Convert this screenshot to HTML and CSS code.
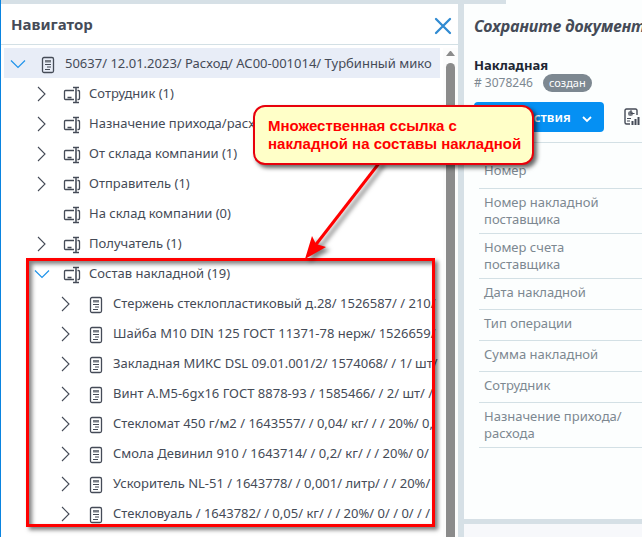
FILE: index.html
```html
<!DOCTYPE html>
<html lang="ru">
<head>
	<meta charset="utf-8">
	<title>Накладная</title>
	<link rel="stylesheet" href="styles.css">
</head>
<body>
	<svg class="sprite">
		<symbol id="doc" viewBox="0 0 18 18">
			<rect x="3.500" y="1.500" width="11" height="15" rx="1.500" fill="none" stroke="#454b57" stroke-width="1.300"/>
			<path d="M6 4h6v2.500H6z" fill="#777c85"/>
			<path d="M6 8.500h6M8 11h4M6 13.500h5" stroke="#454b57" stroke-width="1.100"/>
		</symbol>
		<symbol id="field" viewBox="0 0 18 18">
			<path d="M11 4.500H2.500q-1 0-1 1v7q0 1 1 1H11M14.500 4.500h1q1 0 1 1v7q0 1-1 1h-1M4.500 11.500h4" fill="none" stroke="#454b57" stroke-width="1.300"/>
			<path d="M10 1.500h6M10 16.500h6" stroke="#454b57" stroke-width="1.300"/>
			<path d="M13 2v14" stroke="#6c717b" stroke-width="2"/>
		</symbol>
		<symbol id="right" viewBox="0 0 16 16">
			<path d="M4 1l7 7-7 7" fill="none" stroke="#454b57" stroke-width="1.100"/>
		</symbol>
		<symbol id="down" viewBox="0 0 16 16">
			<path d="M1 4.500l7 7 7-7" fill="none" stroke="#1f93ea" stroke-width="1.200"/>
		</symbol>
	</svg>
	<div class="page">
		<nav class="navigator">
			<div class="nav-head">
				<h2>Навигатор</h2>
				<button class="close" aria-label="Закрыть">
					<svg width="18" height="18" viewBox="0 0 18 18"><path d="M2 2l14 14M16 2L2 16" stroke="#318bd2" stroke-width="2.300" stroke-linecap="round"/></svg>
				</button>
			</div>
			<div class="nav-body">
				<ul class="tree">
					<li class="row root"><button class="toggle" aria-label="Свернуть"><svg><use href="#down"/></svg></button><svg class="ico"><use href="#doc"/></svg><a href="#">50637/ 12.01.2023/ Расход/ АС00-001014/ Турбинный мико</a></li>
					<li class="row sub"><button class="toggle" aria-label="Развернуть"><svg><use href="#right"/></svg></button><svg class="ico"><use href="#field"/></svg><a href="#">Сотрудник (1)</a></li>
					<li class="row sub"><button class="toggle" aria-label="Развернуть"><svg><use href="#right"/></svg></button><svg class="ico"><use href="#field"/></svg><a href="#">Назначение прихода/расхода (1)</a></li>
					<li class="row sub"><button class="toggle" aria-label="Развернуть"><svg><use href="#right"/></svg></button><svg class="ico"><use href="#field"/></svg><a href="#">От склада компании (1)</a></li>
					<li class="row sub"><button class="toggle" aria-label="Развернуть"><svg><use href="#right"/></svg></button><svg class="ico"><use href="#field"/></svg><a href="#">Отправитель (1)</a></li>
					<li class="row sub"><span class="toggle"></span><svg class="ico"><use href="#field"/></svg><a href="#">На склад компании (0)</a></li>
					<li class="row sub"><button class="toggle" aria-label="Развернуть"><svg><use href="#right"/></svg></button><svg class="ico"><use href="#field"/></svg><a href="#">Получатель (1)</a></li>
					<li class="row sub"><button class="toggle" aria-label="Свернуть"><svg><use href="#down"/></svg></button><svg class="ico"><use href="#field"/></svg><a href="#">Состав накладной (19)</a></li>
					<li class="row item"><button class="toggle" aria-label="Развернуть"><svg><use href="#right"/></svg></button><svg class="ico"><use href="#doc"/></svg><a href="#">Стержень стеклопластиковый д.28/ 1526587/ / 210/</a></li>
					<li class="row item"><button class="toggle" aria-label="Развернуть"><svg><use href="#right"/></svg></button><svg class="ico"><use href="#doc"/></svg><a href="#">Шайба М10 DIN 125 ГОСТ 11371-78 нерж/ 1526659/</a></li>
					<li class="row item"><button class="toggle" aria-label="Развернуть"><svg><use href="#right"/></svg></button><svg class="ico"><use href="#doc"/></svg><a href="#">Закладная МИКС DSL 09.01.001/2/ 1574068/ / 1/ шт/</a></li>
					<li class="row item"><button class="toggle" aria-label="Развернуть"><svg><use href="#right"/></svg></button><svg class="ico"><use href="#doc"/></svg><a href="#">Винт А.М5-6gx16 ГОСТ 8878-93 / 1585466/ / 2/ шт/ /</a></li>
					<li class="row item"><button class="toggle" aria-label="Развернуть"><svg><use href="#right"/></svg></button><svg class="ico"><use href="#doc"/></svg><a href="#">Стекломат 450 г/м2 / 1643557/ / 0,04/ кг/ / / 20%/ 0,</a></li>
					<li class="row item"><button class="toggle" aria-label="Развернуть"><svg><use href="#right"/></svg></button><svg class="ico"><use href="#doc"/></svg><a href="#">Смола Девинил 910 / 1643714/ / 0,2/ кг/ / / 20%/ 0/</a></li>
					<li class="row item"><button class="toggle" aria-label="Развернуть"><svg><use href="#right"/></svg></button><svg class="ico"><use href="#doc"/></svg><a href="#">Ускоритель NL-51 / 1643778/ / 0,001/ литр/ / / 20%/</a></li>
					<li class="row item"><button class="toggle" aria-label="Развернуть"><svg><use href="#right"/></svg></button><svg class="ico"><use href="#doc"/></svg><a href="#">Стекловуаль / 1643782/ / 0,05/ кг/ / / 20%/ 0/ / 0/ / /</a></li>
				</ul>
				<div class="scroll">
					<span class="scroll-up"></span>
					<span class="thumb"></span>
				</div>
			</div>
		</nav>
		<main class="content">
			<section class="card">
				<p class="notice">Сохраните документ</p>
				<h1>Накладная</h1>
				<div class="meta"><span># 3078246</span><span class="badge">создан</span></div>
				<div class="tools">
					<button class="actions">Действия <svg width="12" height="8" viewBox="0 0 12 8"><path d="M2 2l4 4 4-4" fill="none" stroke="#fff" stroke-width="1.800"/></svg></button>
					<button class="report" aria-label="Отчёт">
						<svg width="16" height="18" viewBox="0 0 16 18">
							<path d="M13 7V2.500q0-1.500-1.500-1.500h-9Q1 1 1 2.500v12Q1 16 2.500 16H6" fill="none" stroke="#454b57" stroke-width="1.400"/>
							<circle cx="6.500" cy="5.500" r="2.500" fill="#777c85"/>
							<path d="M7 2v3.500h3.500M3 10.500h4M3 13h3" fill="none" stroke="#454b57"/>
							<path d="M8.500 17v-4M11.500 17v-6M14.500 17V9" stroke="#454b57" stroke-width="2"/>
						</svg>
					</button>
				</div>
				<table class="fields">
					<tr><th>Номер</th><td></td></tr>
					<tr><th>Номер накладной поставщика</th><td></td></tr>
					<tr><th>Номер счета<br>поставщика</th><td></td></tr>
					<tr><th>Дата накладной</th><td></td></tr>
					<tr><th>Тип операции</th><td></td></tr>
					<tr><th>Сумма накладной</th><td></td></tr>
					<tr><th>Сотрудник</th><td></td></tr>
					<tr><th>Назначение прихода/<wbr>расхода</th><td></td></tr>
				</table>
			</section>
			<section class="next-card"></section>
		</main>
	</div>
	<!-- пояснения поверх интерфейса -->
	<div class="frame"></div>
	<svg class="pointer" width="90" height="110" viewBox="0 0 90 110">
		<path d="M80 5L14 90" stroke="#f00" stroke-width="3"/>
		<path d="M5 102l7-23 4 8 10 3z" fill="#f00"/>
	</svg>
	<div class="callout">Множественная ссылка с<br>накладной на составы накладной</div>
</body>
</html>
```
FILE: styles.css
```css
* {
	margin: 0;
	padding: 0;
	box-sizing: border-box;
}
body {
	font: 13px/17px "Noto Sans", "Open Sans", sans-serif;
	color: #454b57;
	background: #d6e0e6;
	overflow: hidden;
}
a {
	color: inherit;
	text-decoration: none;
}
button {
	font: inherit;
	color: inherit;
	border: 0;
	background: none;
	cursor: pointer;
}
.sprite {
	display: none;
}
.page {
	display: flex;
	gap: 6px;
	height: 100vh;
	border-left: 1px solid #0a84e0;
}
.navigator {
	display: flex;
	flex-direction: column;
	flex: 0 0 457px;
	min-width: 0;
	margin-top: 4px;
	background: #fff;
}
.nav-head {
	display: flex;
	align-items: center;
	justify-content: space-between;
	height: 41px;
	padding: 0 6px 0 10px;
	border-bottom: 1px solid #d3e0e5;
}
.nav-head h2 {
	font-size: 15px;
	line-height: 20px;
}
.close {
	height: 18px;
	padding-top: 2px;
}
.close svg {
	display: block;
}
.nav-body {
	display: flex;
	flex: 1;
	min-height: 0;
	padding: 3px 0 0 3px;
}
.tree {
	flex: 1;
	min-width: 0;
	overflow: hidden;
	list-style: none;
}
.row {
	display: flex;
	align-items: center;
	height: 30px;
	white-space: nowrap;
}
.root {
	margin-right: 3px;
	background: #e8edf7;
}
.sub {
	padding-left: 24px;
}
.item {
	padding-left: 48px;
}
.toggle {
	flex: 0 0 28px;
	height: 16px;
}
.toggle svg {
	display: block;
	width: 16px;
	height: 16px;
	margin: 1px auto 0;
}
.ico {
	flex: 0 0 18px;
	height: 18px;
	margin: 3px 8px 0 7px;
}
.scroll {
	flex: 0 0 15px;
	padding: 3px 3px 0;
	background: #fcfcfc;
}
.scroll span {
	display: block;
}
.scroll-up {
	width: 9px;
	border: 4px solid transparent;
	border-top: 0;
	border-bottom: 5px solid #8b8b8b;
}
.thumb {
	width: 9px;
	height: 100%;
	margin-top: 7px;
	border-radius: 5px;
	background: #8b8b8b;
}
.content {
	display: flex;
	flex-direction: column;
	gap: 5px;
	flex: 1;
	min-width: 0;
	overflow: hidden;
}
.card {
	flex: 0 0 519px;
	padding: 12px 0 0 10px;
	border-top: 4px solid #d6e0e6;
	border-image: linear-gradient(to right, #d6e0e6 44px, #fcfefe 44px) 4;
	background: #fcfefe;
}
.next-card {
	flex: 1;
	background: #f7f8fb;
}
.notice {
	font-size: 16px;
	line-height: 20px;
	font-weight: bold;
	font-style: italic;
	white-space: nowrap;
}
h1 {
	margin-top: 20px;
	font-size: 13px;
	line-height: 18px;
	color: #212633;
}
.meta {
	display: flex;
	gap: 10px;
	font-size: 12px;
	line-height: 18px;
	color: #7d8891;
}
.badge {
	padding: 0 6px;
	border-radius: 9px;
	font-size: 11px;
	color: #fff;
	background: #7d8891;
}
.tools {
	display: flex;
	align-items: center;
	gap: 20px;
	padding: 10px 0;
	border-bottom: 1px solid #d3e0e5;
}
.actions {
	flex: 0 0 130px;
	height: 30px;
	padding: 0 11px 0 34px;
	border-radius: 4px;
	font-weight: 600;
	text-align: left;
	color: #fff;
	background: #0590f3;
}
.actions svg {
	float: right;
	margin-top: 6px;
}
.report {
	flex: 0 0 18px;
	height: 18px;
}
.report svg {
	display: block;
}
.fields {
	width: calc(100% - 5px);
	margin: 14px 0 0 5px;
	border-collapse: collapse;
}
.fields tr {
	height: 31px;
	border-bottom: 1px solid #d3e0e5;
}
.fields th {
	width: 100%;
	padding: 5px;
	font-weight: normal;
	text-align: left;
	vertical-align: top;
	color: #7d8891;
}
.frame {
	position: absolute;
	left: 26px;
	top: 258px;
	width: 409px;
	height: 269px;
	border: 3px solid #f00;
	box-shadow: 3px 3px 4px rgba(0, 0, 0, .5), inset 3px 3px 4px rgba(0, 0, 0, .5);
}
.pointer {
	position: absolute;
	left: 300px;
	top: 157px;
	filter: drop-shadow(4px 3px 2px rgba(0, 0, 0, .5));
}
.callout {
	position: absolute;
	left: 253px;
	top: 105px;
	padding: 10px 11px 10px 13px;
	border: 2px solid #e8000b;
	border-radius: 12px;
	font: bold 15px/18px "Liberation Sans", Arial, sans-serif;
	white-space: nowrap;
	color: #f00;
	background: #ffffc8;
	box-shadow: 3px 3px 4px rgba(0, 0, 0, .6);
}
```
